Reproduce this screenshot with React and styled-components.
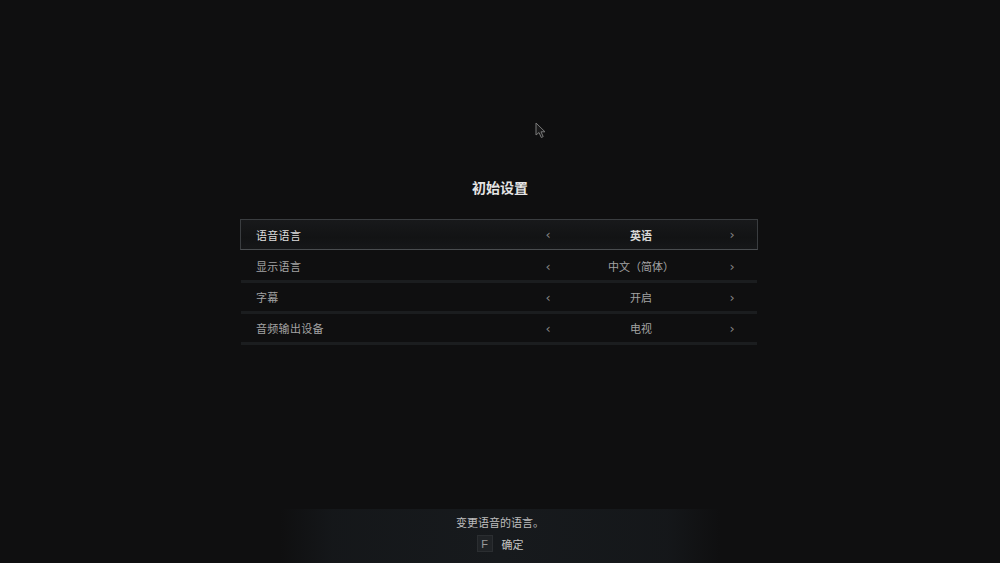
import React from "react";
import styled, { createGlobalStyle, css } from "styled-components";

const GlobalStyle = createGlobalStyle`
  html, body {
    margin: 0;
    padding: 0;
    background: #0f0f10;
    font-family: "Noto Sans CJK SC", "Noto Sans", sans-serif;
  }
  * { box-sizing: border-box; }
`;

const Screen = styled.div`
  position: relative;
  width: 100%;
  height: 100vh;
  display: flex;
  flex-direction: column;
  align-items: center;
  overflow: hidden;
  background: #0f0f10;
`;

const Main = styled.main`
  width: 518px;
  margin-right: 2px;
  padding-top: 177px;
  display: flex;
  flex-direction: column;
  align-items: stretch;
`;

const Title = styled.h1`
  margin: 0 0 22px;
  padding-left: 2px;
  height: 20px;
  line-height: 20px;
  text-align: center;
  font-size: 14px;
  font-weight: 700;
  color: #e4e4e4;
`;

const List = styled.div`
  display: flex;
  flex-direction: column;
`;

const Row = styled.div`
  height: 31px;
  display: flex;
  align-items: center;
  font-size: 11px;
  ${({ $active }) =>
    $active
      ? css`
          margin-bottom: 2px;
          padding: 0 0 0 15px;
          border: 1px solid #3a3d40;
          border-bottom-color: #4a4d50;
          background: linear-gradient(180deg, #18191b 0%, #121314 60%, #161719 100%);
          color: #dcdcdc;
        `
      : css`
          margin: 0 1px;
          padding: 0 0 0 15px;
          border-bottom: 3px solid #1b1d1f;
          color: #a3a3a3;
        `}
`;

const Label = styled.span`
  flex: 1;
  letter-spacing: 0.3px;
`;

const Picker = styled.div`
  width: 194px;
  margin-right: 20px;
  display: flex;
  align-items: center;
`;

const Arrow = styled.span`
  width: 10px;
  font-size: 13px;
  line-height: 13px;
  color: #858585;
  text-align: center;
  font-family: "DejaVu Sans", sans-serif;
`;

const Value = styled.span`
  flex: 1;
  text-align: center;
  padding-left: 2px;
  font-weight: ${({ $active }) => ($active ? 700 : 400)};
  color: ${({ $active }) => ($active ? "#d6d6d6" : "inherit")};
`;

const Footer = styled.footer`
  margin-top: auto;
  width: 440px;
  height: 54px;
  padding-top: 5px;
  display: flex;
  flex-direction: column;
  align-items: center;
  gap: 5px;
  background: linear-gradient(
    90deg,
    rgba(22, 25, 28, 0) 0%,
    rgba(22, 25, 28, 0.8) 12%,
    #171a1d 50%,
    rgba(22, 25, 28, 0.8) 88%,
    rgba(22, 25, 28, 0) 100%
  );
`;

const Hint = styled.div`
  font-size: 11px;
  line-height: 16px;
  color: #bdbdbd;
`;

const Action = styled.div`
  display: flex;
  align-items: center;
  gap: 9px;
  font-size: 11px;
  color: #c4c4c4;
`;

const Key = styled.span`
  width: 16px;
  height: 17px;
  display: flex;
  align-items: center;
  justify-content: center;
  background: #202326;
  border: 1px solid #2b2e31;
  color: #9a9a9a;
  font-family: "Liberation Sans", sans-serif;
  font-size: 11px;
`;

const Pointer = styled.svg`
  position: absolute;
  left: 535px;
  top: 122px;
`;

const options = [
  { label: "语音语言", value: "英语", active: true },
  { label: "显示语言", value: "中文（简体）" },
  { label: "字幕", value: "开启" },
  { label: "音频输出设备", value: "电视" },
];

export default function App() {
  return (
    <Screen>
      <GlobalStyle />
      <Main>
        <Title>初始设置</Title>
        <List>
          {options.map((o) => (
            <Row key={o.label} $active={o.active}>
              <Label>{o.label}</Label>
              <Picker>
                <Arrow>‹</Arrow>
                <Value $active={o.active}>{o.value}</Value>
                <Arrow>›</Arrow>
              </Picker>
            </Row>
          ))}
        </List>
      </Main>
      <Footer>
        <Hint>变更语音的语言。</Hint>
        <Action>
          <Key>F</Key>
          <span>确定</span>
        </Action>
      </Footer>
      <Pointer width="12" height="17" viewBox="0 0 12 17">
        <path
          d="M1 1 L1 13 L4 10.5 L6.3 15.5 L8.2 14.6 L6 9.8 L10 9.8 Z"
          fill="#1a1a1b"
          stroke="#7a7a7a"
          strokeWidth="1"
          strokeLinejoin="round"
        />
      </Pointer>
    </Screen>
  );
}
